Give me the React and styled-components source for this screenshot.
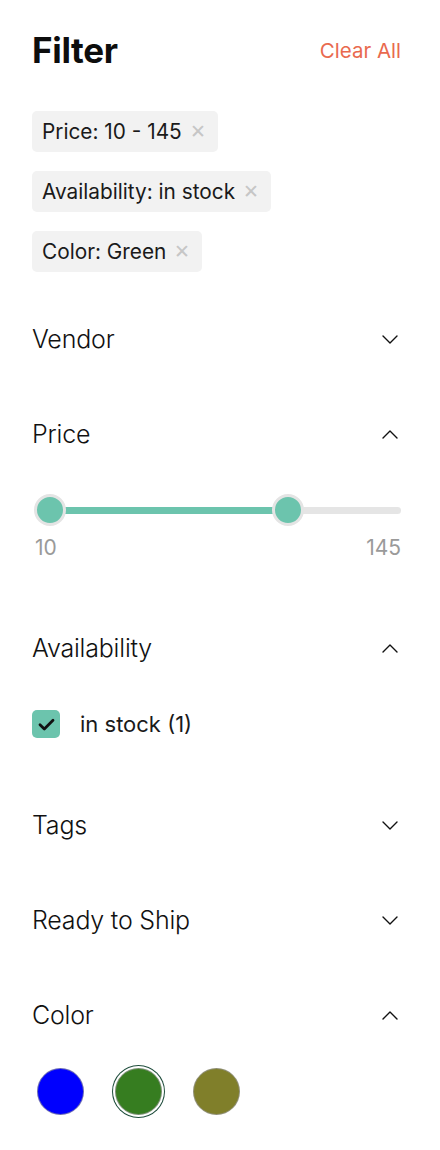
import React from "react";
import styled, { createGlobalStyle } from "styled-components";

const Global = createGlobalStyle`
  html, body { margin: 0; padding: 0; background: #fff; }
  body { font-family: Inter, "Noto Sans", sans-serif; color: #111; }
  * { box-sizing: border-box; }
`;

const Page = styled.div`
  width: 440px;
  padding: 30px 39px 0 32px;
`;

const TopBar = styled.div`
  height: 40px;
  display: flex;
  align-items: center;
  justify-content: space-between;
  margin-bottom: 41px;
`;

const Title = styled.h1`
  margin: 0;
  font-family: Inter, sans-serif;
  font-size: 35px;
  font-weight: 700;
  letter-spacing: -0.3px;
  color: #0d0d0d;
`;

const ClearAll = styled.button`
  border: 0;
  background: none;
  padding: 0;
  font-family: Inter, sans-serif;
  font-size: 20.5px;
  color: #e9694e;
  cursor: pointer;
`;

const ChipList = styled.div`
  display: flex;
  flex-direction: column;
  align-items: flex-start;
  gap: 19px;
  padding-bottom: 20px;
`;

const Chip = styled.div`
  height: 41px;
  display: inline-flex;
  align-items: center;
  gap: 8px;
  padding: 0 12px 0 10px;
  background: #f2f2f2;
  border-radius: 5px;
  font-size: 20.8px;
  color: #1a1a1a;
`;

const ChipX = styled.span`
  color: #c6c6c6;
  font-size: 19px;
  line-height: 1;
  font-weight: 300;
`;

const Section = styled.section`
  padding: 31px 0 32px;
`;

const SectionHead = styled.div`
  height: 32px;
  display: flex;
  align-items: center;
  justify-content: space-between;
`;

const SectionTitle = styled.span`
  font-family: Inter, sans-serif;
  font-size: 25px;
  font-weight: 300;
  letter-spacing: -0.2px;
  color: #111;
`;

const Chevron = styled.svg`
  width: 16px;
  height: 9px;
  margin-right: 3px;
  transform: ${(p) => (p.$up ? "rotate(180deg)" : "none")};
`;

const Content = styled.div`
  padding-top: ${(p) => p.$top}px;
  padding-bottom: ${(p) => p.$bottom || 0}px;
`;

const SliderRow = styled.div`
  position: relative;
  height: 44px;
  display: flex;
  align-items: center;
`;

const Track = styled.div`
  position: relative;
  width: 100%;
  height: 7px;
  margin-left: 3px;
  border-radius: 4px;
  background: #e5e5e5;
`;

const Fill = styled.div`
  position: absolute;
  top: 0;
  bottom: 0;
  background: #6cc4ad;
`;

const Thumb = styled.div`
  position: absolute;
  top: 50%;
  width: 32px;
  height: 32px;
  margin: -16px 0 0 -16px;
  border-radius: 50%;
  background: #6cc4ad;
  border: 3px solid #e4e4e4;
`;

const RangeLabels = styled.div`
  display: flex;
  justify-content: space-between;
  margin-top: 4px;
  font-size: 21px;
  line-height: 24px;
  color: #9a9a9a;
  padding-left: 3px;
`;

const CheckRow = styled.label`
  height: 44px;
  display: flex;
  align-items: center;
  gap: 20px;
  font-size: 22px;
  color: #1a1a1a;
`;

const Box = styled.span`
  width: 28px;
  height: 28px;
  border-radius: 5px;
  background: #6cc4ad;
  display: flex;
  align-items: center;
  justify-content: center;
`;

const Swatches = styled.div`
  height: 52px;
  display: flex;
  align-items: center;
  gap: 31px;
  padding-left: 5px;
`;

const Swatch = styled.span`
  width: 47px;
  height: 47px;
  border-radius: 50%;
  background: ${(p) => p.$color};
  border: 1px solid rgba(150, 150, 150, 0.7);
  box-shadow: ${(p) =>
    p.$active ? "0 0 0 2px #fff, 0 0 0 3px #1f4d3c" : "none"};
`;

const ChevronIcon = ({ up }) => (
  <Chevron $up={up} viewBox="0 0 16 9" fill="none">
    <path d="M1 1l7 7 7-7" stroke="#111" strokeWidth="1.4" strokeLinecap="round" strokeLinejoin="round" />
  </Chevron>
);

const Head = ({ title, up }) => (
  <SectionHead>
    <SectionTitle>{title}</SectionTitle>
    <ChevronIcon up={up} />
  </SectionHead>
);

const min = 10;
const max = 145;
const lo = 10;
const hi = 145;

export default function App() {
  const loPct = 4;
  const hiPct = 69;
  return (
    <Page>
      <Global />
      <TopBar>
        <Title>Filter</Title>
        <ClearAll>Clear All</ClearAll>
      </TopBar>
      <ChipList>
        <Chip>Price: {lo} - {hi}<ChipX>✕</ChipX></Chip>
        <Chip>Availability: in stock<ChipX>✕</ChipX></Chip>
        <Chip>Color: Green<ChipX>✕</ChipX></Chip>
      </ChipList>

      <Section>
        <Head title="Vendor" />
      </Section>

      <Section>
        <Head title="Price" up />
        <Content $top={38} $bottom={9}>
          <SliderRow>
            <Track>
              <Fill style={{ left: `${loPct}%`, width: `${hiPct - loPct}%` }} />
              <Thumb style={{ left: `${loPct}%` }} />
              <Thumb style={{ left: `${hiPct}%` }} />
            </Track>
          </SliderRow>
          <RangeLabels>
            <span>{min}</span>
            <span>{max}</span>
          </RangeLabels>
        </Content>
      </Section>

      <Section>
        <Head title="Availability" up />
        <Content $top={38}>
          <CheckRow>
            <Box>
              <svg width="17" height="13" viewBox="0 0 17 13" fill="none">
                <path d="M2 6.8l4.3 4.2 8.7-8.7" stroke="#111" strokeWidth="2.8" strokeLinecap="round" strokeLinejoin="round" />
              </svg>
            </Box>
            in stock (1)
          </CheckRow>
        </Content>
      </Section>

      <Section>
        <Head title="Tags" />
      </Section>

      <Section>
        <Head title="Ready to Ship" />
      </Section>

      <Section>
        <Head title="Color" up />
        <Content $top={34}>
          <Swatches>
            <Swatch $color="#0000fe" />
            <Swatch $color="#367d20" $active />
            <Swatch $color="#807f2a" />
          </Swatches>
        </Content>
      </Section>
    </Page>
  );
}
